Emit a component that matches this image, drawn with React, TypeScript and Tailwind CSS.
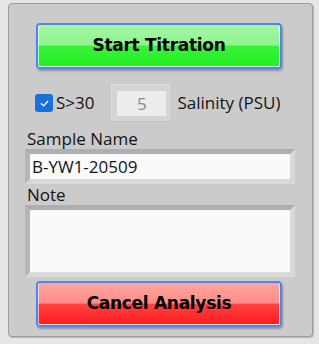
const font = { fontFamily: '"Open Sans", "Noto Sans", sans-serif' };
const btnFont = { fontFamily: '"DejaVu Sans", Verdana, sans-serif' };

function GlossButton({ label, tone }: { label: string; tone: 'green' | 'red' }) {
  const face =
    tone === 'green'
      ? 'bg-[linear-gradient(to_bottom,#a4f7a4_0%,#8ef38e_48%,#3af23a_50%,#22ef22_100%)]'
      : 'bg-[linear-gradient(to_bottom,#ffa39e_0%,#ff8d88_48%,#ff4343_50%,#ff1c1c_100%)]';
  return (
    <div className="w-[246px] h-[46px] rounded-[4px] border-2 border-[#4d86f2] shadow-[1px_2px_2px_rgba(0,0,0,0.28)]">
      <div
        className={`w-full h-full rounded-[2px] border border-white/60 ${face} flex items-center justify-center`}
      >
        <span className="text-[17px] font-bold text-black tracking-[-0.3px]" style={btnFont}>
          {label}
        </span>
      </div>
    </div>
  );
}

function Field({ height, value }: { height: string; value?: string }) {
  return (
    <div
      className={`w-[270px] ${height} border-[5px] border-t-[#aeaeae] border-l-[#b6b6b6] border-r-[#d9d9d9] border-b-[#d9d9d9]`}
    >
      <div className="w-full h-full bg-[#fafafa] px-[2px] flex items-start">
        {value && <span className="text-[17px] leading-[26px] text-[#141414]">{value}</span>}
      </div>
    </div>
  );
}

export default function App() {
  return (
    <div className="w-[319px] h-[344px] bg-[#e6e6e6] pt-[3px] pl-[8px]" style={font}>
      <div className="w-[305px] h-[334px] bg-[#cbcbcb] border border-[#9c9c9c] rounded-[4px] shadow-[1px_1px_1px_rgba(0,0,0,0.2)] flex flex-col">
        <div className="mt-[19px] pl-[27px]">
          <GlossButton label="Start Titration" tone="green" />
        </div>

        <div className="mt-[15px] h-[38px] pl-[26px] flex items-center">
          <div className="w-[18px] h-[18px] rounded-[3px] bg-[#1b6fdb] flex items-center justify-center">
            <svg width="11" height="11" viewBox="0 0 12 12" fill="none">
              <path d="M2.5 6.3 L5 8.6 L9.6 3.6" stroke="white" strokeWidth="1.4" strokeLinecap="round" strokeLinejoin="round" />
            </svg>
          </div>
          <span className="ml-[3px] text-[17px] text-[#141414]">S&gt;30</span>
          <div className="ml-[17px] w-[61px] h-[38px] bg-[#d4d4d4] border border-t-[#dedede] border-l-[#dedede] border-r-[#c4c4c4] border-b-[#c4c4c4] p-[5px]">
            <div className="w-full h-full bg-[#ececec] border-t border-t-[#d2d2d2] flex items-center justify-center">
              <span className="text-[17px] text-[#8a8a8a]">5</span>
            </div>
          </div>
          <span className="ml-[5px] text-[17px] text-[#141414]">Salinity (PSU)</span>
        </div>

        <div className="pl-[16px] mt-[7px] flex flex-col">
          <span className="text-[17px] leading-[20px] text-[#141414] pl-[2px]">Sample Name</span>
          <Field height="h-[35px]" value="B-YW1-20509" />
          <span className="mt-[1px] text-[17px] leading-[20px] text-[#141414] pl-[2px]">Note</span>
          <Field height="h-[72px]" />
        </div>

        <div className="mt-[4px] pl-[27px]">
          <GlossButton label="Cancel Analysis" tone="red" />
        </div>
      </div>
    </div>
  );
}
